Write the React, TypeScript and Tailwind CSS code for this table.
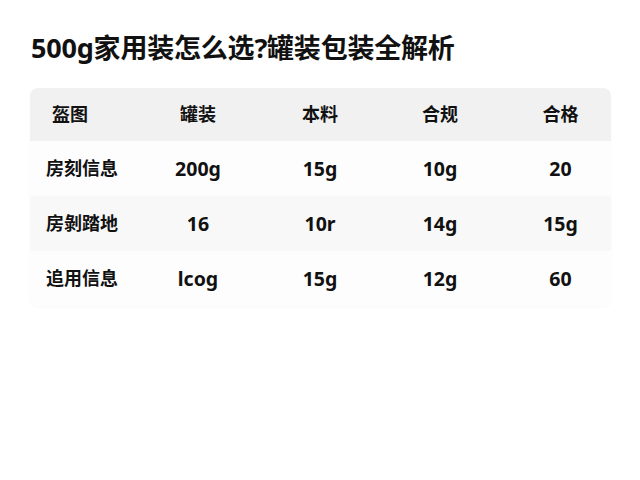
import React from "react";

const header = ["盔图", "罐装", "本料", "合规", "合格"];

const rows = [
  { label: "房刻信息", values: ["200g", "15g", "10g", "20"], bg: "bg-[#fdfdfd]" },
  { label: "房剝踏地", values: ["16", "10r", "14g", "15g"], bg: "bg-[#f8f8f8]" },
  { label: "追用信息", values: ["lcog", "15g", "12g", "60"], bg: "bg-[#fdfdfd]" },
];

const grid = "grid grid-cols-[108px_120px_124px_116px_1fr] items-center";

export default function App() {
  return (
    <div
      className="w-[640px] h-[480px] bg-white text-[#111] overflow-hidden"
      style={{ fontFamily: '"Noto Sans", "Noto Sans CJK SC", sans-serif' }}
    >
      {/* Title */}
      <h1 className="pt-[30px] pl-[31px] text-[27px] leading-[36px] font-bold tracking-[-0.2px]">
        500g家用装怎么选?罐装包装全解析
      </h1>

      {/* Table */}
      <div className="mt-[22px] ml-[30px] w-[581px] rounded-lg overflow-hidden shadow-[0_1px_3px_rgba(0,0,0,0.03)]">
        <div className={`${grid} h-[53px] bg-[#f1f1f1] text-[18px] font-bold`}>
          <div className="pl-[22px]">{header[0]}</div>
          <div className="text-center">{header[1]}</div>
          <div className="text-center">{header[2]}</div>
          <div className="text-center">{header[3]}</div>
          <div className="text-center pl-3">{header[4]}</div>
        </div>
        {rows.map((r) => (
          <div key={r.label} className={`${grid} h-[55px] ${r.bg} font-bold`}>
            <div className="pl-[16px] text-[18px]">{r.label}</div>
            {r.values.map((v, i) => (
              <div key={i} className={`text-center text-[19.5px] ${i === 3 ? "pl-3" : ""}`}>
                {v}
              </div>
            ))}
          </div>
        ))}
      </div>
    </div>
  );
}
